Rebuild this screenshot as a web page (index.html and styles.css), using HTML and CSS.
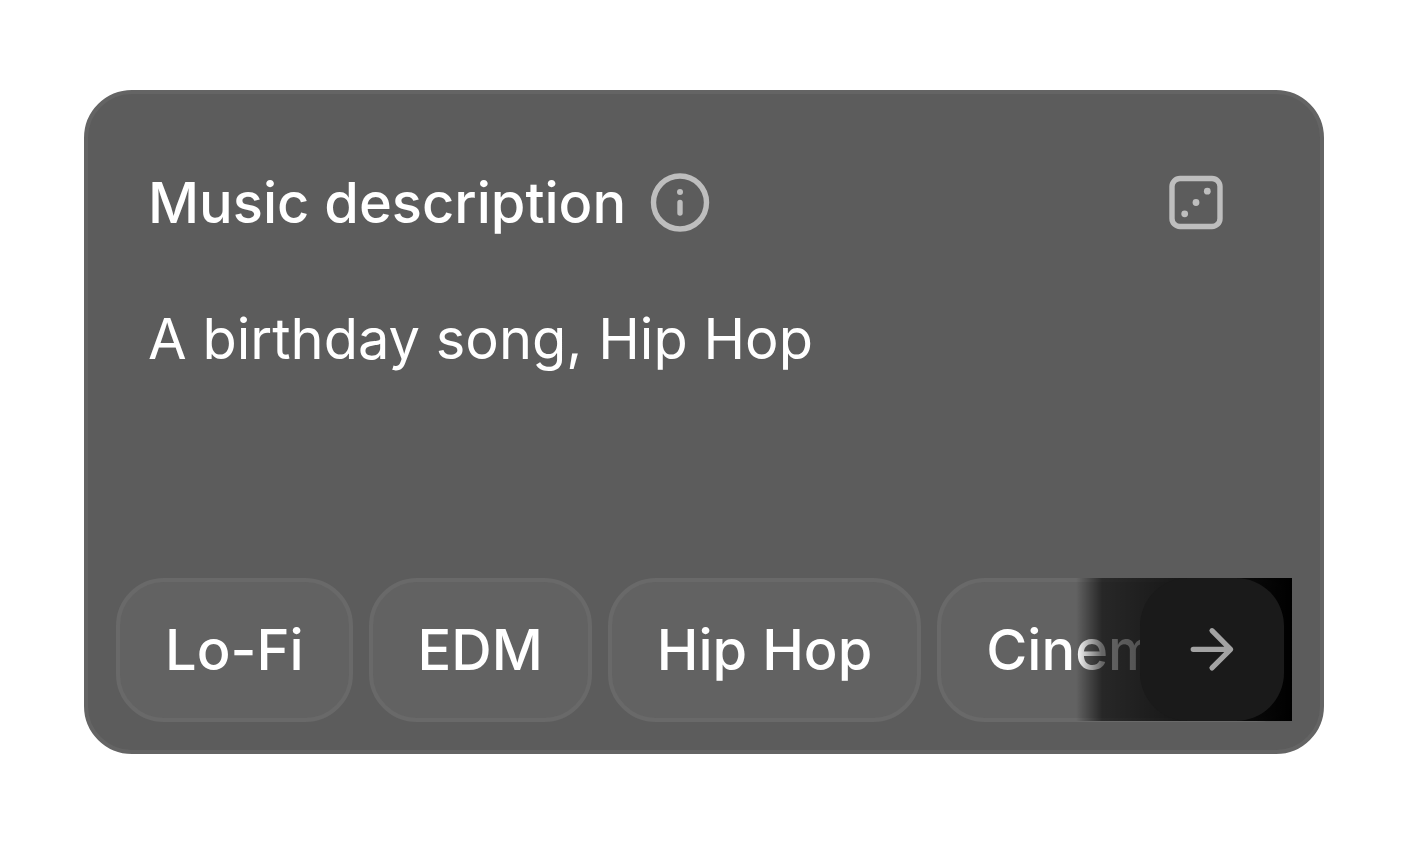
FILE: index.html
```html
<!DOCTYPE html>
<html lang="en">
	<head>
		<meta charset="UTF-8">
		<title>Music description</title>
		<link rel="stylesheet" href="styles.css">
	</head>
	<body>
		<div class="card">
			<div class="header">
				<label for="description">Music description</label>
				<button type="button" class="icon-btn" aria-label="Info">
					<svg width="64" height="64" viewBox="0 0 64 64" fill="none">
						<circle cx="32" cy="31.5" r="26.5" stroke="currentColor" stroke-width="5.4"/>
						<path d="M32 31.5v10.5" stroke="currentColor" stroke-width="5.4" stroke-linecap="round"/>
						<circle cx="32" cy="21" r="3" fill="currentColor"/>
					</svg>
				</button>
				<button type="button" class="icon-btn random" aria-label="Random">
					<svg width="64" height="64" viewBox="0 0 64 64" fill="none">
						<rect x="8" y="7.5" width="48" height="48" rx="8" stroke="currentColor" stroke-width="5.4"/>
						<circle cx="20.7" cy="42.8" r="3.4" fill="currentColor"/>
						<circle cx="32" cy="31.5" r="3.4" fill="currentColor"/>
						<circle cx="43.3" cy="20.2" r="3.4" fill="currentColor"/>
					</svg>
				</button>
			</div>
			<textarea id="description" spellcheck="false">A birthday song, Hip Hop</textarea>
			<div class="styles">
				<div class="list">
					<button type="button" class="chip">Lo-Fi</button>
					<button type="button" class="chip">EDM</button>
					<button type="button" class="chip">Hip Hop</button>
					<button type="button" class="chip">Cinematic</button>
				</div>
				<div class="fade">
					<button type="button" class="next" aria-label="Next">
						<svg width="64" height="64" viewBox="0 0 64 64" fill="none" stroke="currentColor" stroke-width="5.2" stroke-linecap="round" stroke-linejoin="round">
							<path d="M13.2 31.3H50.5M32 12.7L50.6 31.3L32 49.9"/>
						</svg>
					</button>
				</div>
			</div>
		</div>
	</body>
</html>
```

FILE: styles.css
```css
*{
	box-sizing: border-box;
}
body{
	margin: 0;
	padding: 90px 84px;
	background: #fff;
	font-family: Inter, "Liberation Sans", sans-serif;
}
button{
	margin: 0;
	padding: 0;
	border: 0;
	background: none;
	font: inherit;
	color: inherit;
}
svg{
	display: block;
}
.card{
	padding: 77px 28px 28px;
	border: 4px solid #646464;
	border-radius: 48px;
	background: #5c5c5c;
	color: #fff;
	font-size: 56px;
	line-height: 80px;
}
.header{
	display: flex;
	align-items: center;
	gap: 22px;
	height: 64px;
	padding: 0 64px 0 32px;
	font-weight: 500;
}
.icon-btn{
	color: #bebebe;
}
.random{
	margin-left: auto;
}
textarea{
	display: block;
	width: 100%;
	height: 279px;
	margin: 64px 0 0;
	padding: 0 32px;
	border: 0;
	outline: 0;
	resize: none;
	background: none;
	color: inherit;
	font: inherit;
}
.styles{
	position: relative;
	overflow: hidden;
}
.list{
	display: flex;
	gap: 16px;
}
.chip{
	flex: none;
	height: 144px;
	padding: 0 45px;
	border: 4px solid #696969;
	border-radius: 48px;
	background: #626262;
	font-weight: 500;
}
.fade{
	position: absolute;
	top: 0;
	right: 0;
	bottom: 1px;
	display: flex;
	padding: 0 8px 0 64px;
	background: linear-gradient(to right, transparent, rgba(0, 0, 0, 0.6) 26px, #000);
}
.next{
	display: flex;
	align-items: center;
	justify-content: center;
	width: 144px;
	border-radius: 48px;
	background: #1a1a1a;
	color: #a3a3a3;
}
```
